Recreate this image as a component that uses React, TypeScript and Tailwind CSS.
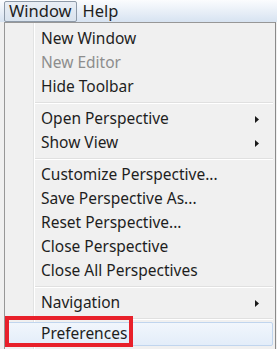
import React from 'react';

type Item = { label?: string; disabled?: boolean; sub?: boolean; sep?: boolean; active?: boolean };

const items: Item[] = [
  { label: 'New Window' },
  { label: 'New Editor', disabled: true },
  { label: 'Hide Toolbar' },
  { sep: true },
  { label: 'Open Perspective', sub: true },
  { label: 'Show View', sub: true },
  { sep: true },
  { label: 'Customize Perspective...' },
  { label: 'Save Perspective As...' },
  { label: 'Reset Perspective...' },
  { label: 'Close Perspective' },
  { label: 'Close All Perspectives' },
  { sep: true },
  { label: 'Navigation', sub: true },
  { sep: true },
  { label: 'Preferences', active: true },
];

const Arrow = () => (
  <svg width="4" height="7" viewBox="0 0 4 7" className="ml-auto mr-[14px]">
    <path d="M0 0 L4 3.5 L0 7 Z" fill="#1a1a1a" />
  </svg>
);

export default function App() {
  return (
    <div className="relative w-[277px] h-[349px] overflow-hidden bg-[#f0f0f0] text-[15.5px] text-[#1e1e1e]" style={{ fontFamily: '"Noto Sans", "Open Sans", sans-serif' }}>
      {/* menu bar */}
      <div className="h-[22px] flex items-center bg-gradient-to-b from-[#fbfcfe] to-[#d7e3f1] text-[16.5px]">
        <div className="ml-[4px] h-[21px] px-[4px] flex items-center border border-[#8e9aa8] rounded-[2px] bg-gradient-to-b from-[#e9eef5] to-[#d9e3ee] leading-none">
          Window
        </div>
        <div className="ml-[6px] leading-none">Help</div>
      </div>

      {/* dropdown */}
      <div className="ml-[4px] w-[272px] h-[340px] border border-[#979797] border-r-[#8a8a8a] bg-[#f0f0f0] bg-[linear-gradient(to_right,transparent_28px,#e2e3e3_28px,#e2e3e3_29px,#ffffff_29px,#ffffff_30px,transparent_30px)] pt-[4px] px-[2px]">
        {items.map((it, i) =>
          it.sep ? (
            <div key={i} className={(i === 14 ? 'h-[7px]' : 'h-[8px]') + ' flex flex-col justify-center pl-[28px]'}>
              <div className="h-px bg-[#e0e0e0]" />
              <div className="h-px bg-white" />
            </div>
          ) : (
            <div
              key={i}
              className={
                'h-[24px] flex items-center leading-none ' +
                (it.active ? 'bg-gradient-to-b from-[#f1f6fc] to-[#e3edf9] border border-[#c0d5ee] rounded-[2px] pl-[33px]' : 'pl-[34px]') +
                (it.disabled ? ' text-[#8d8d8d]' : '')
              }
            >
              {it.label}
              {it.sub && <Arrow />}
            </div>
          )
        )}
      </div>

      {/* red annotation box */}
      <div className="absolute left-[5px] top-[316px] w-[128px] h-[31px] border-[4px] border-[#e8202a]" />
    </div>
  );
}
